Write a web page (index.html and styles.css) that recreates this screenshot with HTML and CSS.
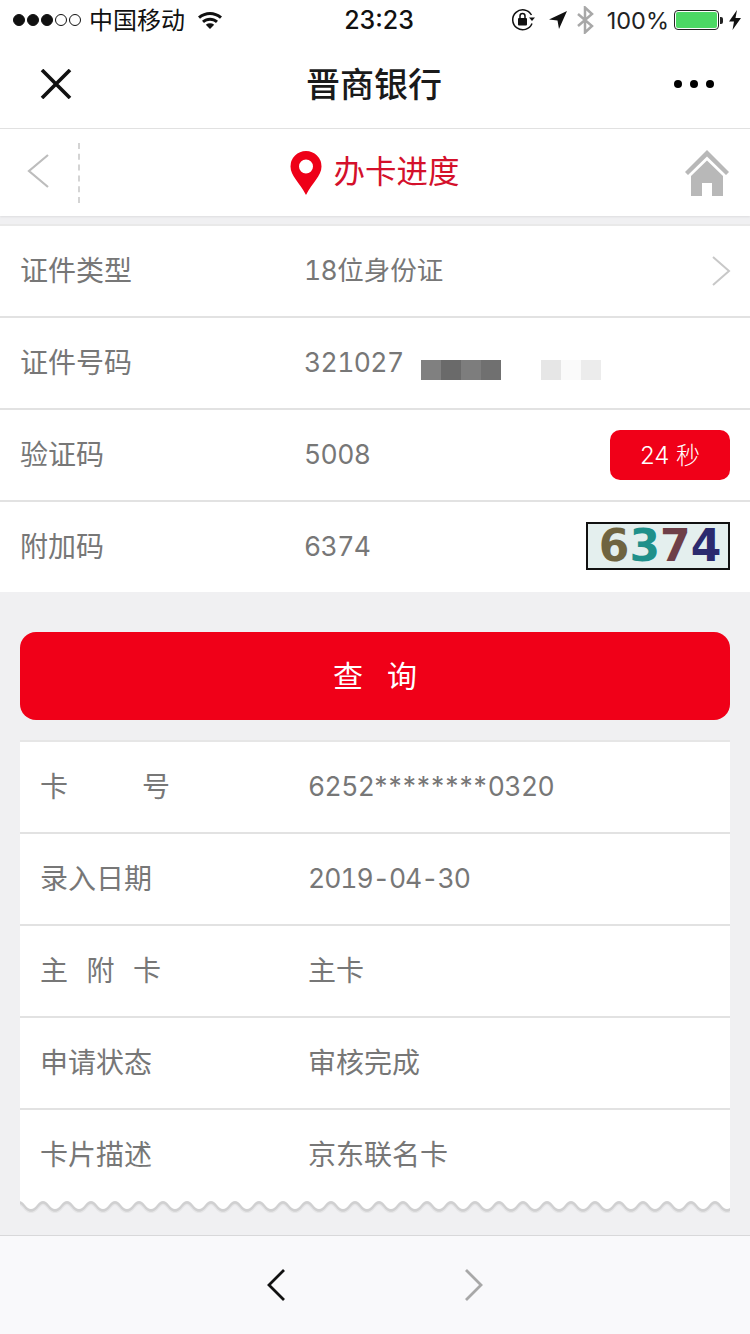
FILE: index.html
```html
<!DOCTYPE html>
<html lang="zh-CN">
<head>
<meta charset="utf-8">
<title>晋商银行</title>
<link rel="stylesheet" href="styles.css">
</head>
<body>
<div class="page">
  <div class="status">
    <div class="st-left">
      <span class="dots"><i class="on"></i><i class="on"></i><i class="on"></i><i></i><i></i></span>
      <span class="carrier">中国移动</span>
      <svg class="wifi" width="26" height="20" viewBox="0 0 26 20"><path d="M1 6.500C8 .5 18 .5 25 6.500l-2 2.200C17 3.700 9 3.700 3 8.700z"/><path d="M5 10.700c4.800-3.900 11.200-3.900 16 0l-2 2.200c-3.700-2.800-8.300-2.800-12 0z"/><path d="M8.800 14.700c2.500-1.800 5.900-1.800 8.400 0L13 19z"/></svg>
    </div>
    <div class="time">23:23</div>
    <div class="st-right">
      <svg width="24" height="24" viewBox="0 0 24 24"><path d="M21 15.500A10 10 0 1 1 20.500 7" fill="none" stroke="#111" stroke-width="1.500"/><path d="M18 9.500h6l-3 3.500z" fill="#111"/><rect x="7" y="10" width="9" height="7.500" rx="1" fill="#111"/><path d="M9 10V8a2.500 2.500 0 0 1 5 0v2" fill="none" stroke="#111" stroke-width="1.500"/></svg>
      <svg class="ml-arrow" width="20" height="20" viewBox="0 0 20 20"><path d="M19 1 1 9.500l8.500 1 1.500 8.500z" fill="#111"/></svg>
      <svg class="ml-bt" width="18" height="28" viewBox="0 0 18 28"><path d="M2 8l14 12-7 6.500V1.500L16 8 2 20" fill="none" stroke="#a8a8a8" stroke-width="2.500"/></svg>
      <span class="pct">100%</span>
      <span class="battery"><i></i></span><span class="nub"></span>
      <svg class="ml-bolt" width="12" height="20" viewBox="0 0 12 20"><path d="M8 0 0 11.500h5L3.500 20 12 8H6.500z" fill="#111"/></svg>
    </div>
  </div>

  <header class="nav">
    <svg class="close" width="32" height="30" viewBox="0 0 32 30"><path d="M2 1l28 28M30 1 2 29" stroke="#111" stroke-width="3.600" fill="none"/></svg>
    <h1 class="nav-title">晋商银行</h1>
    <span class="more"><i></i><i></i><i></i></span>
  </header>

  <div class="sub">
    <div class="sub-left">
      <svg class="back" width="24" height="36" viewBox="0 0 24 36"><path d="M22 2 3 18l19 16" fill="none" stroke="#bdbdbd" stroke-width="2.200"/></svg>
      <span class="dash"></span>
    </div>
    <div class="sub-title">
      <svg width="32" height="44" viewBox="0 0 32 44"><path fill-rule="evenodd" d="M16 0a15.500 15.500 0 0 1 15.500 15.500C31.500 25 22 32 16 44 10 32 .5 25 .5 15.500A15.500 15.500 0 0 1 16 0zm0 8.500a7 7 0 1 0 0 14 7 7 0 0 0 0-14z" fill="#ee0018"/></svg>
      <span class="sub-text">办卡进度</span>
    </div>
    <div class="sub-right">
      <svg width="44" height="46" viewBox="0 0 44 46"><path d="M22 0 44 22l-3 3L22 6.500 3 25l-3-3z" fill="#b8b8b8"/><path fill-rule="evenodd" d="M22 10.500 38 26v20H27V33H17v13H6V26z" fill="#b8b8b8"/></svg>
    </div>
  </div>

  <section class="form">
    <div class="row">
      <span class="label">证件类型</span>
      <span class="value">18<span class="cjk">位身份证</span></span>
      <svg class="chev" width="20" height="32" viewBox="0 0 20 32"><path d="M2 2l16 14L2 30" fill="none" stroke="#c8c8c8" stroke-width="2"/></svg>
    </div>
    <div class="row">
      <span class="label">证件号码</span>
      <span class="value id">321027<span class="mosaic"><i class="m1"></i><i class="m2"></i><i class="m3"></i><i class="m4"></i><i class="gap"></i><i class="m5"></i><i class="m6"></i><i class="m7"></i></span></span>
    </div>
    <div class="row">
      <span class="label">验证码</span>
      <span class="value">5008</span>
      <span class="timer">24 秒</span>
    </div>
    <div class="row last">
      <span class="label">附加码</span>
      <span class="value">6374</span>
      <span class="captcha"><b class="c1">6</b><b class="c2">3</b><b class="c3">7</b><b class="c4">4</b></span>
    </div>
  </section>

  <div class="submit">查<span class="sp"></span>询</div>

  <section class="result">
    <div class="rrow">
      <span class="rlabel wide"><span>卡</span><span>号</span></span>
      <span class="rvalue">6252<span class="stars">********</span>0320</span>
    </div>
    <div class="rrow">
      <span class="rlabel">录入日期</span>
      <span class="rvalue date">2019-04-30</span>
    </div>
    <div class="rrow">
      <span class="rlabel mid"><span>主</span><span>附</span><span>卡</span></span>
      <span class="rvalue cjk">主卡</span>
    </div>
    <div class="rrow">
      <span class="rlabel">申请状态</span>
      <span class="rvalue cjk">审核完成</span>
    </div>
    <div class="rrow">
      <span class="rlabel">卡片描述</span>
      <span class="rvalue cjk">京东联名卡</span>
    </div>
    <svg class="wave" width="710" height="16" viewBox="0 0 710 16">
      <defs>
        <pattern id="tooth" width="24" height="16" patternUnits="userSpaceOnUse" patternTransform="translate(11 0)">
          <path d="M-24 10Q-21 10-18 6T-12 2-6 6 0 10 6 6 12 2 18 6 24 10 30 6 36 2 42 6 48 10" fill="none" stroke="#b4b4b4" stroke-width="6" stroke-opacity=".18"/>
          <path d="M-24 10Q-21 10-18 6T-12 2-6 6 0 10 6 6 12 2 18 6 24 10 30 6 36 2 42 6 48 10" fill="none" stroke="#a8a8a8" stroke-width="3.500" stroke-opacity=".35"/>
          <path d="M0 0H24V9Q21 9 18 5T12 1 6 5 0 9z" fill="#fff"/>
        </pattern>
      </defs>
      <rect width="710" height="16" fill="#f0f0f2"/>
      <rect width="710" height="16" fill="url(#tooth)"/>
    </svg>
  </section>

  <footer class="foot">
    <svg width="20" height="34" viewBox="0 0 20 34"><path d="M18 2 3 17l15 15" fill="none" stroke="#111" stroke-width="2.800"/></svg>
    <svg width="20" height="34" viewBox="0 0 20 34"><path d="M2 2l15 15L2 32" fill="none" stroke="#a8a8a8" stroke-width="2.800"/></svg>
  </footer>
</div>
</body>
</html>
```
FILE: styles.css
```css
* { box-sizing: border-box; margin: 0; padding: 0; }
html, body { width: 750px; height: 1334px; overflow: hidden; }
body { font-family: "Noto Sans CJK SC", "Liberation Sans", sans-serif; background: #f0f0f2; }
.page { width: 750px; height: 1334px; display: flex; flex-direction: column; }

.status { height: 40px; background: #fff; display: grid; grid-template-columns: 1fr auto 1fr; align-items: center; padding: 0 9px 0 13px; color: #111; }
.st-left { display: flex; align-items: center; }
.st-right { display: flex; align-items: center; justify-content: flex-end; }
.dots { display: flex; gap: 2px; }
.dots i { width: 12px; height: 12px; border-radius: 50%; border: 1px solid #111; }
.dots i.on { background: #111; }
.carrier { font-size: 24px; margin-left: 8px; line-height: 38px; height: 40px; }
.wifi { margin-left: 12px; fill: #111; }
.time { font-family: Inter, "Liberation Sans", sans-serif; font-size: 25px; font-weight: 500; margin-left: 4px; }
.ml-arrow { margin-left: 13px; }
.ml-bt { margin-left: 8px; }
.pct { font-family: Inter, "Liberation Sans", sans-serif; font-size: 23.500px; margin-left: 13px; color: #222; }
.battery { width: 45px; height: 20px; border: 1.500px solid #222; border-radius: 4px; padding: 1px; margin-left: 5px; display: block; }
.battery i { display: block; height: 100%; background: #4cd964; border-radius: 2px; }
.nub { width: 3px; height: 7px; background: #222; border-radius: 0 2px 2px 0; margin-left: 1px; }
.ml-bolt { margin-left: 6px; }

.nav { height: 89px; background: #fff; border-bottom: 1px solid #e2e2e2; display: grid; grid-template-columns: 1fr auto 1fr; align-items: center; padding: 0 39px 0 37px; }
.close { margin-left: 3px; }
.nav-title { font-size: 34px; font-weight: 500; color: #1a1a1a; line-height: 1; margin-bottom: 2px; }
.more { display: flex; gap: 8px; justify-content: flex-end; margin-right: -3px; }
.more i { width: 8px; height: 8px; border-radius: 50%; background: #000; }

.sub { height: 87px; background: #fff; display: grid; grid-template-columns: 1fr auto 1fr; align-items: center; box-shadow: 0 1px 2px rgba(0,0,0,.08); position: relative; }
.sub-left { display: flex; align-items: center; padding-left: 26px; }
.back { margin-top: -4px; }
.dash { height: 60px; margin-left: 28px; border-left: 2px dashed #d4d4d4; }
.sub-title { display: flex; align-items: center; gap: 11px; color: #d4102b; font-size: 31.500px; }
.sub-text { margin-bottom: 8px; }
.sub-right { display: flex; justify-content: flex-end; padding-right: 21px; }

.form { margin-top: 8px; background: #fff; border-top: 2px solid #e9e9e9; }
.row { height: 92px; border-bottom: 2px solid #e2e2e2; display: flex; align-items: center; padding: 0 20px; font-size: 28px; color: #777; }
.row.last { height: 90px; border-bottom: 0; }
.label { width: 284px; margin-bottom: 5px; }
.value { flex: 1; font-family: Inter, "Noto Sans CJK SC", sans-serif; font-size: 26.500px; font-variant-numeric: tabular-nums; letter-spacing: -.6px; margin-bottom: 2px; }
.cjk { font-family: "Noto Sans CJK SC", sans-serif; letter-spacing: 0; line-height: 1; }
.id { display: flex; align-items: center; }
.mosaic { display: flex; margin-left: 17px; margin-top: 16px; height: 20px; }
.mosaic i { width: 20px; height: 20px; }
.mosaic .m1 { background: #808080; } .mosaic .m2 { background: #6a6a6a; } .mosaic .m3 { background: #7d7d7d; } .mosaic .m4 { background: #707070; }
.mosaic .gap { width: 40px; }
.mosaic .m5 { background: #e6e6e6; } .mosaic .m6 { background: #fafafa; } .mosaic .m7 { background: #ececec; }
.timer { width: 120px; height: 50px; border-radius: 10px; background: #f00018; color: #fff; font-size: 24px; font-weight: 300; padding-bottom: 4px; display: flex; align-items: center; justify-content: center; font-family: Inter, "Noto Sans CJK SC", sans-serif; }
.chev { margin-right: -1px; }
.captcha { width: 144px; height: 48px; margin-top: -2px; border: 2px solid #111; background: #e4efee; display: flex; align-items: center; justify-content: center; padding-left: 4px; font-family: "DejaVu Sans", sans-serif; font-size: 44px; line-height: 1; }
.captcha b { font-weight: 700; }
.c1 { color: #6f6440; } .c2 { color: #20908a; } .c3 { color: #6e3f48; } .c4 { color: #2b2a6e; }

.submit { margin: 40px 20px 0; height: 88px; border-radius: 16px; background: #f00018; color: #fff; font-size: 30px; padding-bottom: 4px; display: flex; align-items: center; justify-content: center; }
.sp { width: 24px; }

.result { margin: 20px 20px 0; background: #fff; border-top: 2px solid #e6e6e6; position: relative; }
.rrow { height: 92px; display: flex; align-items: center; padding-left: 21px; border-bottom: 2px solid #e2e2e2; font-size: 28px; color: #777; }
.rrow:nth-last-child(2) { border-bottom: 0; height: 90px; }
.rlabel { width: 267px; display: flex; flex: none; margin-bottom: 5px; margin-left: -1px; }
.rlabel.wide { gap: 74px; }
.rlabel.mid { gap: 18.500px; }
.rvalue { font-family: Inter, "Noto Sans CJK SC", sans-serif; font-size: 26.500px; font-variant-numeric: tabular-nums; letter-spacing: -.6px; margin-bottom: 2px; margin-left: 1px; }
.rvalue.cjk { font-size: 28px; letter-spacing: 0; line-height: normal; margin-bottom: 5px; }
.date { letter-spacing: -1px; }
.stars { font-variant-numeric: normal; letter-spacing: .9px; }
.wave { display: block; margin-bottom: -16px; }

.foot { margin-top: auto; height: 99px; background: #f9f9fb; border-top: 1px solid #d8d8da; display: flex; align-items: center; justify-content: center; gap: 178px; }
```
